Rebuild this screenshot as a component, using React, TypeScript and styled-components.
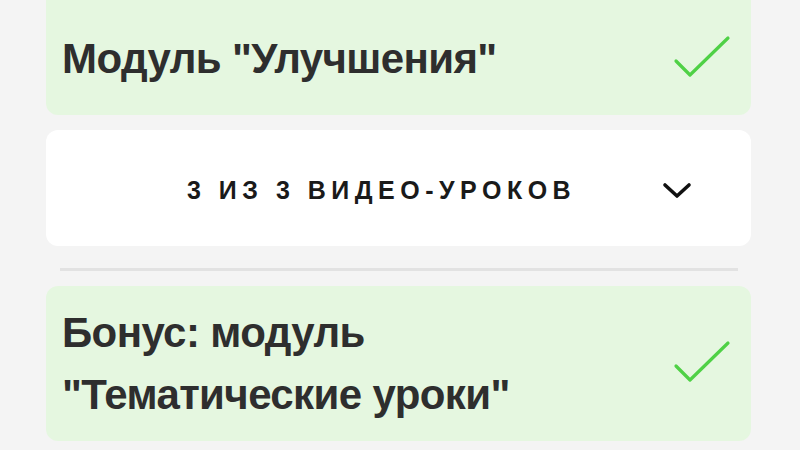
import React from 'react';
import styled, { createGlobalStyle } from 'styled-components';

const GlobalStyle = createGlobalStyle`
	html, body {
		margin: 0;
		padding: 0;
		background: #f4f4f4;
		overflow: hidden;
	}
	body {
		font-family: 'Liberation Sans', Arial, sans-serif;
		color: #2e2e2e;
	}
`;

interface Module {
	title: string[];
	done: boolean;
}

const modules: Module[] = [
	{ title: ['Модуль "Улучшения"'], done: true },
	{ title: ['Бонус: модуль', '"Тематические уроки"'], done: true },
];

function CheckIcon() {
	return (
		<svg width="58" height="48" viewBox="0 0 58 48" fill="none">
			<path d="M3 26 L17 40 L55 3" stroke="#4fd146" strokeWidth="3.2" strokeLinecap="round" strokeLinejoin="round" />
		</svg>
	);
}

function ChevronIcon() {
	return (
		<svg width="32" height="20" viewBox="0 0 32 20" fill="none">
			<path d="M4 5 L16 16 L28 5" stroke="#111" strokeWidth="3.6" strokeLinecap="round" strokeLinejoin="round" />
		</svg>
	);
}

function ModuleCard({ module, tall }: { module: Module; tall?: boolean }) {
	return (
		<DoneCard $tall={tall}>
			<Title>
				{module.title.map((line) => (
					<span key={line}>{line}</span>
				))}
			</Title>
			{module.done && <CheckIcon />}
		</DoneCard>
	);
}

export default function App() {
	return (
		<>
			<GlobalStyle />
			<Page>
				<ModuleCard module={modules[0]} />
				<LessonsRow>
					<LessonsCount>3 из 3 видео-уроков</LessonsCount>
					<ChevronIcon />
				</LessonsRow>
				<Divider />
				<ModuleCard module={modules[1]} tall />
			</Page>
		</>
	);
}

const Page = styled.div`
	width: 800px;
	height: 450px;
	box-sizing: border-box;
	padding: 0 49px 0 46px;
	display: flex;
	flex-direction: column;
`;

const DoneCard = styled.div<{ $tall?: boolean }>`
	display: flex;
	align-items: center;
	justify-content: space-between;
	box-sizing: border-box;
	height: ${({ $tall }) => ($tall ? '155px' : '127px')};
	margin-top: ${({ $tall }) => ($tall ? '0' : '-12px')};
	padding: ${({ $tall }) => ($tall ? '0 20px 0 16px' : '14px 20px 0 16px')};
	background: #e5f7e0;
	border-radius: 12px;
`;

const Title = styled.div`
	display: flex;
	flex-direction: column;
	font-size: 42px;
	line-height: 62px;
	font-weight: 700;
	letter-spacing: -0.6px;
	color: #2e2e2e;
`;

const LessonsRow = styled.div`
	display: flex;
	align-items: center;
	box-sizing: border-box;
	height: 116px;
	margin-top: 15px;
	padding: 4px 58px 0 141px;
	background: #fff;
	border-radius: 12px;
`;

const LessonsCount = styled.div`
	flex: 1;
	font-size: 25px;
	font-weight: 700;
	text-transform: uppercase;
	letter-spacing: 5.5px;
	color: #1a1a1a;
`;

const Divider = styled.div`
	height: 3px;
	margin: 22px 13px 15px 14px;
	background: #e2e2e2;
`;
